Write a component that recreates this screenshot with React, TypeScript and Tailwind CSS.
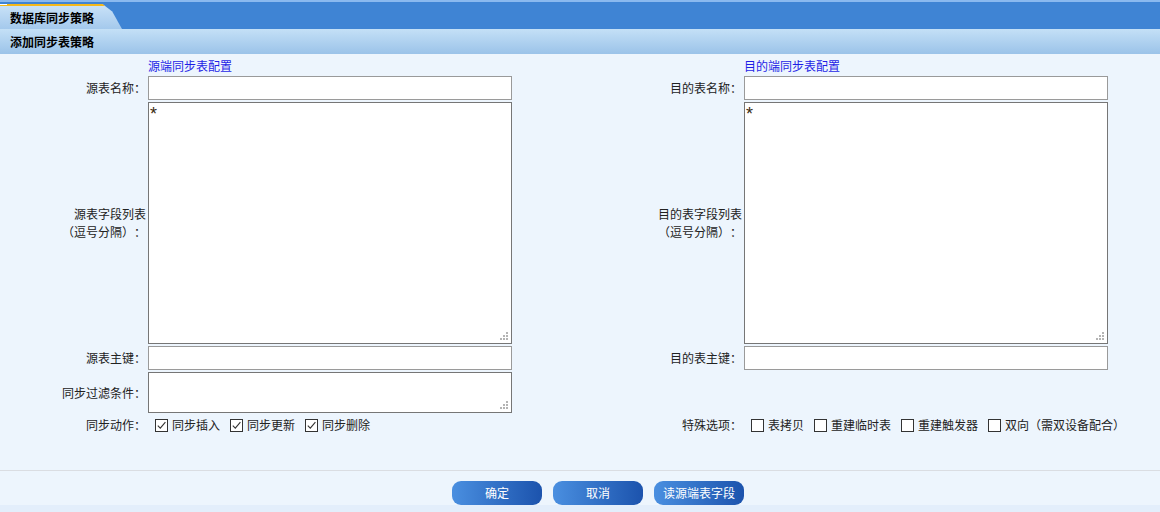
import React from "react";

function Grip() {
  return (
    <svg className="absolute right-[3px] bottom-[3px]" width="8" height="8" viewBox="0 0 8 8">
      <rect x="6" y="0" width="2" height="2" fill="#b4b4b4" />
      <rect x="3" y="3" width="2" height="2" fill="#b4b4b4" />
      <rect x="6" y="3" width="2" height="2" fill="#b4b4b4" />
      <rect x="0" y="6" width="2" height="2" fill="#b4b4b4" />
      <rect x="3" y="6" width="2" height="2" fill="#b4b4b4" />
      <rect x="6" y="6" width="2" height="2" fill="#b4b4b4" />
    </svg>
  );
}

function Area({ value }: { value?: string }) {
  return (
    <div className="relative h-full w-full border border-[#767676] bg-white">
      <textarea
        readOnly
        defaultValue={value}
        className="block h-full w-full resize-none bg-white px-[1px] py-[1px] text-[18px] leading-[20px] text-[#3a2a10] outline-none font-['Liberation_Sans',sans-serif]"
      />
      <Grip />
    </div>
  );
}

function Input() {
  return <div className="h-full w-full border border-[#9a9a9a] bg-white" />;
}

function Box({ checked }: { checked?: boolean }) {
  return (
    <span className="flex h-[13px] w-[13px] shrink-0 items-center justify-center border border-[#333] bg-white">
      {checked && (
        <svg width="11" height="11" viewBox="0 0 11 11">
          <path d="M1.8 5.6 L4.3 8.2 L9.4 2.2" fill="none" stroke="#333" strokeWidth="1.1" />
        </svg>
      )}
    </span>
  );
}

function Label({ children }: { children: React.ReactNode }) {
  return <div className="flex h-full items-center justify-end pr-[2px] text-right">{children}</div>;
}

function Btn({ children }: { children: React.ReactNode }) {
  return (
    <div className="flex h-[24px] w-[90px] items-center justify-center rounded-[9px] bg-gradient-to-r from-[#4a8fe0] to-[#1c53ad] text-[12px] text-white">
      {children}
    </div>
  );
}

export default function App() {
  return (
    <div className="flex h-[512px] w-[1160px] flex-col overflow-hidden bg-[#edf5fd] text-[12px] text-[#222] font-['Noto_Sans_CJK_SC',sans-serif] [text-spacing-trim:space-all]">
      {/* top bar */}
      <div className="flex h-[29px] shrink-0 border-t-2 border-[#8ab9ef] bg-[#3f84d4]">
        <div className="relative mt-[2px] h-[25px] w-[122px] bg-gradient-to-b from-[#cbe3f8] to-[#a4c9ec] [clip-path:polygon(0_0,84%_0,92%_30%,100%_100%,0_100%)]">
          <div className="h-[2px] w-full bg-[#f5b81a]" />
          <div className="absolute left-0 top-0 h-[1px] w-[7px] bg-white" />
          <div className="flex h-[23px] items-center pl-[10px] font-bold text-black">数据库同步策略</div>
        </div>
      </div>
      {/* second bar */}
      <div className="flex h-[25px] shrink-0 items-center bg-gradient-to-b from-[#c4e0f6] to-[#9bc3e9] pl-[10px] font-bold text-black">
        添加同步表策略
      </div>

      {/* form */}
      <div className="grid grid-cols-[148px_364px_232px_364px] grid-rows-[20px_24px_242px_24px_41px_20px] gap-y-[2px]">
        <div />
        <div className="flex items-center pt-[3px] text-[#1e1ee6]">源端同步表配置</div>
        <div />
        <div className="flex items-center pt-[3px] text-[#1e1ee6]">目的端同步表配置</div>

        <Label>源表名称：</Label>
        <Input />
        <Label>目的表名称：</Label>
        <Input />

        <div className="flex h-full items-center justify-end pr-[2px] text-right leading-[18px]">
          <div>
            源表字段列表
            <br />
            （逗号分隔）：
          </div>
        </div>
        <Area value="*" />
        <div className="flex h-full items-center justify-end pr-[2px] text-right leading-[18px]">
          <div>
            目的表字段列表
            <br />
            （逗号分隔）：
          </div>
        </div>
        <Area value="*" />

        <Label>源表主键：</Label>
        <Input />
        <Label>目的表主键：</Label>
        <Input />

        <Label>同步过滤条件：</Label>
        <Area />
        <div />
        <div />

        <Label>同步动作：</Label>
        <div className="ml-[7px] flex items-center whitespace-nowrap">
          <Box checked />
          <span className="ml-[4px] mr-[10px]">同步插入</span>
          <Box checked />
          <span className="ml-[4px] mr-[10px]">同步更新</span>
          <Box checked />
          <span className="ml-[4px]">同步删除</span>
        </div>
        <Label>特殊选项：</Label>
        <div className="ml-[7px] flex items-center whitespace-nowrap">
          <Box />
          <span className="ml-[4px] mr-[10px]">表拷贝</span>
          <Box />
          <span className="ml-[4px] mr-[10px]">重建临时表</span>
          <Box />
          <span className="ml-[4px] mr-[10px]">重建触发器</span>
          <Box />
          <span className="ml-[4px]">双向（需双设备配合）</span>
        </div>
      </div>

      <div className="flex-1" />
      <div className="h-[35px] shrink-0 border-t border-[#dadde2]">
        <div className="flex gap-[11px] pl-[452px] pt-[10px]">
          <Btn>确定</Btn>
          <Btn>取消</Btn>
          <Btn>读源端表字段</Btn>
        </div>
      </div>
      <div className="h-[7px] shrink-0 bg-[#e3eefb]" />
    </div>
  );
}
